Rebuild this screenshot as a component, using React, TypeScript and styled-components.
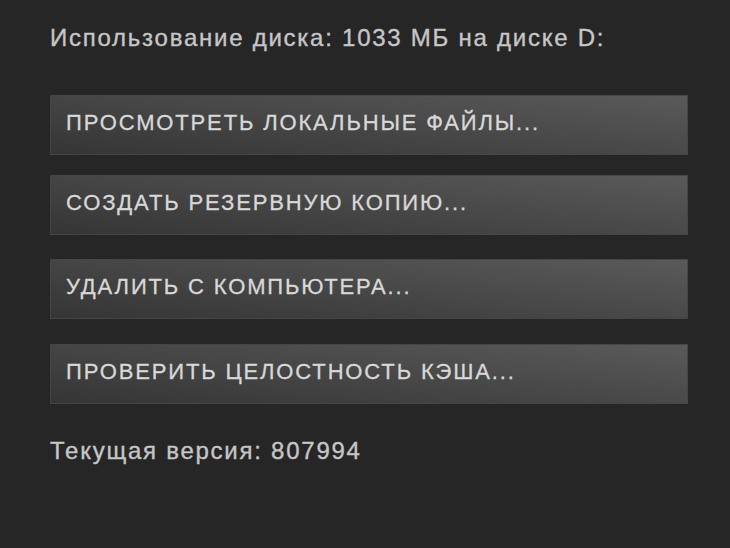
import React from 'react';
import styled, { createGlobalStyle } from 'styled-components';

const GlobalStyle = createGlobalStyle`
  html, body {
    margin: 0;
    padding: 0;
    background: #262626;
  }
  body {
    width: 730px;
    height: 548px;
    overflow: hidden;
    font-family: "Liberation Sans", Arial, sans-serif;
  }
`;

const Panel = styled.div`
  display: flex;
  flex-direction: column;
  width: 638px;
  padding: 24px 0 0 50px;
`;

const Label = styled.div`
  color: #c6c6c6;
  font-size: 24px;
  line-height: 28px;
  letter-spacing: 1.75px;
  -webkit-text-stroke: 0.35px #c6c6c6;
`;

const ActionButton = styled.button<{ $gap: number }>`
  display: flex;
  align-items: center;
  height: 60px;
  margin-top: ${(p) => p.$gap}px;
  padding: 0 0 5px 15px;
  box-sizing: border-box;
  border: 1px solid #454545;
  border-radius: 0;
  background:
    linear-gradient(to bottom, rgba(255, 255, 255, 0.05), rgba(0, 0, 0, 0.1)),
    linear-gradient(to right, #3b3b3b, #515151);
  color: #d8d8d8;
  font-family: inherit;
  font-size: 22px;
  letter-spacing: 1.85px;
  -webkit-text-stroke: 0.3px #d8d8d8;
  text-align: left;
  cursor: pointer;
`;

const VersionLabel = styled(Label)`
  margin-top: 33px;
`;

const actions = [
  { label: 'ПРОСМОТРЕТЬ ЛОКАЛЬНЫЕ ФАЙЛЫ...', gap: 43 },
  { label: 'СОЗДАТЬ РЕЗЕРВНУЮ КОПИЮ...', gap: 20 },
  { label: 'УДАЛИТЬ С КОМПЬЮТЕРА...', gap: 24 },
  { label: 'ПРОВЕРИТЬ ЦЕЛОСТНОСТЬ КЭША...', gap: 25 },
];

export default function App() {
  return (
    <>
      <GlobalStyle />
      <Panel>
        <Label>Использование диска: 1033 МБ на диске D:</Label>
        {actions.map((a) => (
          <ActionButton key={a.label} $gap={a.gap}>
            {a.label}
          </ActionButton>
        ))}
        <VersionLabel>Текущая версия: 807994</VersionLabel>
      </Panel>
    </>
  );
}
